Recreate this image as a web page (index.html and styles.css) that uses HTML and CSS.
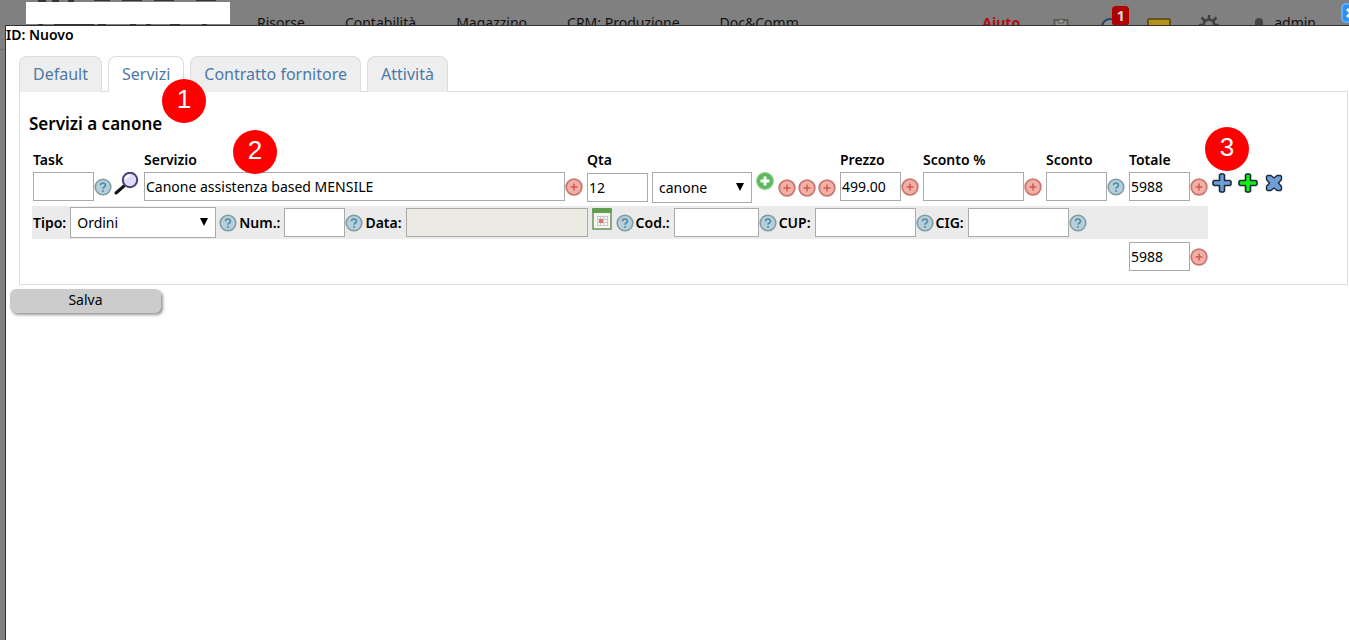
FILE: index.html
```
<!DOCTYPE html>
<html lang="it">
<head>
    <meta charset="UTF-8">
    <meta name="viewport" content="width=device-width, initial-scale=1.0">
    <title>Contratto</title>
    <link rel="stylesheet" href="styles.css">
</head>
<body>

    <!-- icone condivise -->
    <svg class="sprite" aria-hidden="true">
        <symbol id="i-help" viewBox="0 0 18 18">
            <circle cx="9" cy="9" r="7.8" fill="#b5d0da" stroke="#7f9ca4" stroke-width="1.6"/>
            <path d="M6.5 7.3C6.5 4.3 11.5 4.3 11.5 7.2C11.5 9 9 9 9 10.8" fill="none" stroke="#4f87a5" stroke-width="1.6"/>
            <circle cx="9" cy="12.9" r="1" fill="#4f87a5"/>
        </symbol>
        <symbol id="i-req" viewBox="0 0 18 18">
            <circle cx="9" cy="9" r="7.8" fill="#f3b0a6" stroke="#cb7670" stroke-width="1.8"/>
            <path d="M9 5.5V12.5M5.5 9H12.5" stroke="#cf5a50" stroke-width="1.5"/>
        </symbol>
        <symbol id="i-plus" viewBox="0 0 20 20">
            <path d="M8.5 1H11.5L12.5 2V7.5H18L19 8.5V11.5L18 12.5H12.5V18L11.5 19H8.5L7.5 18V12.5H2L1 11.5V8.5L2 7.5H7.5V2Z" fill="currentColor" stroke="#1c2b3c" stroke-width="1.6" stroke-linejoin="round"/>
        </symbol>
    </svg>

    <header class="topbar">
        <div class="logo">
            <svg width="204" height="26" aria-hidden="true">
                <path d="M12 0h8v2h-8zM26 0h7v2h-7zM42 0h6v2h-6zM68 0h16v1h-16zM96 0h20v1h-20zM128 0h20v1h-20zM170 0h20v1h-20z" fill="#333"/>
                <rect y="2" width="204" height="22" fill="#fff"/>
                <path d="M12 24h5v2h-5zM28 24h40v1h-40zM72 24h8v1h-8zM104 24h6v1h-6zM120 24h5v1h-5zM144 24h10v1h-10zM176 24h5v1h-5z" fill="#333"/>
            </svg>
        </div>
        <nav class="menu">
            <a href="#">Risorse</a>
            <a href="#">Contabilità</a>
            <a href="#">Magazzino</a>
            <a href="#">CRM: Produzione</a>
            <a href="#">Doc&amp;Comm</a>
        </nav>
        <div class="tools">
            <a href="#" class="help-link">Aiuto</a>
            <svg width="16" height="20" viewBox="0 0 16 20" aria-hidden="true">
                <path d="M1.5 5H14.5V19H1.5Z" fill="#929292" stroke="#5c5950" stroke-width="1.8"/>
                <path d="M5 8V5H7V4H9V5H11V8Z" fill="#999" stroke="#5c5950"/>
            </svg>
            <span class="alerts">
                <svg width="22" height="20" viewBox="0 0 22 20" aria-hidden="true">
                    <circle cx="13" cy="12" r="8" fill="#8b8f93" stroke="#1d4468" stroke-width="2"/>
                </svg>
                <span class="count">1</span>
            </span>
            <svg width="24" height="20" viewBox="0 0 24 20" aria-hidden="true">
                <rect x="1" y="4" width="22" height="15" rx="1" fill="#b8901c" stroke="#54420f" stroke-width="1.6"/>
            </svg>
            <svg width="20" height="20" viewBox="0 0 20 20" aria-hidden="true">
                <circle cx="10" cy="10" r="5.5" fill="none" stroke="#404040" stroke-width="2.5"/>
                <path d="M10 0V4M10 16V20M0 10H4M16 10H20M2.5 2.5L6 6M14 14L17.5 17.5M17.5 2.5L14 6M6 14L2.5 17.5" stroke="#404040" stroke-width="2.5"/>
            </svg>
            <a href="#" class="user">
                <svg width="10" height="20" viewBox="0 0 10 20" aria-hidden="true">
                    <rect x="1" y="5" width="8" height="13" rx="4" fill="#444"/>
                </svg>
                admin
            </a>
        </div>
    </header>

    <button type="button" class="close-btn" aria-label="Chiudi">
        <svg width="20" height="20" viewBox="0 0 20 20" aria-hidden="true">
            <rect x="1" y="1" width="18" height="18" rx="4" fill="#2f8ff5" stroke="#5ab0ff" stroke-width="2"/>
            <path d="M6 6L14 14M14 6L6 14" stroke="#fff" stroke-width="2.5"/>
        </svg>
    </button>

    <main class="modal">
        <div class="record-id">ID: Nuovo</div>

        <nav class="tabs">
            <a href="#" class="tab">Default</a>
            <a href="#" class="tab active">Servizi<span class="marker marker-tab">1</span></a>
            <a href="#" class="tab">Contratto fornitore</a>
            <a href="#" class="tab">Attività</a>
        </nav>

        <form>
            <section class="panel">
                <h2>Servizi a canone</h2>
                <div class="lines">
                    <div class="line-main">
                        <div class="service-row">
                            <div class="field">
                                <label for="task">Task</label>
                                <div class="controls">
                                    <input type="text" id="task" class="w-small">
                                    <svg class="icon"><use href="#i-help"/></svg>
                                    <svg class="lens" viewBox="0 0 28 26" aria-hidden="true">
                                        <path d="M4 21L12 14" stroke="#111" stroke-width="3" stroke-linecap="round"/>
                                        <circle cx="18" cy="8" r="7.2" fill="#dedcf8" stroke="#45407a" stroke-width="2"/>
                                        <path d="M13.5 7A5 5 0 0 1 18 3.5" fill="none" stroke="#fff" stroke-width="2"/>
                                    </svg>
                                </div>
                            </div>
                            <div class="field">
                                <label for="servizio">Servizio</label>
                                <div class="controls">
                                    <input type="text" id="servizio" class="w-large" value="Canone assistenza based MENSILE">
                                    <svg class="icon"><use href="#i-req"/></svg>
                                </div>
                                <span class="marker marker-service">2</span>
                            </div>
                            <div class="field">
                                <label for="qta">Qta</label>
                                <div class="controls qty">
                                    <input type="text" id="qta" class="w-small" value="12">
                                    <span class="select unit">
                                        <select aria-label="Unità">
                                            <option>canone</option>
                                        </select>
                                    </span>
                                    <svg class="icon add" viewBox="0 0 18 18" aria-hidden="true">
                                        <circle cx="9" cy="9" r="8.3" fill="#5cb85a" stroke="#8bc98a" stroke-width="1.2"/>
                                        <path d="M9 4.5V13.5M4.5 9H13.5" stroke="#fff" stroke-width="3"/>
                                    </svg>
                                    <div class="icon-set">
                                        <svg class="icon"><use href="#i-req"/></svg>
                                        <svg class="icon"><use href="#i-req"/></svg>
                                        <svg class="icon"><use href="#i-req"/></svg>
                                    </div>
                                </div>
                            </div>
                            <div class="field">
                                <label for="prezzo">Prezzo</label>
                                <div class="controls">
                                    <input type="text" id="prezzo" class="w-small" value="499.00">
                                    <svg class="icon"><use href="#i-req"/></svg>
                                </div>
                            </div>
                            <div class="field">
                                <label for="sconto-perc">Sconto %</label>
                                <div class="controls">
                                    <input type="text" id="sconto-perc" class="w-medium">
                                    <svg class="icon"><use href="#i-req"/></svg>
                                </div>
                            </div>
                            <div class="field">
                                <label for="sconto">Sconto</label>
                                <div class="controls">
                                    <input type="text" id="sconto" class="w-small">
                                    <svg class="icon"><use href="#i-help"/></svg>
                                </div>
                            </div>
                            <div class="field">
                                <label for="totale">Totale</label>
                                <div class="controls">
                                    <input type="text" id="totale" class="w-small" value="5988">
                                    <svg class="icon"><use href="#i-req"/></svg>
                                </div>
                            </div>
                        </div>

                        <div class="order-row">
                            <div class="pair">
                                <label for="tipo">Tipo:</label>
                                <span class="select type">
                                    <select id="tipo">
                                        <option>Ordini</option>
                                    </select>
                                </span>
                                <svg class="icon"><use href="#i-help"/></svg>
                            </div>
                            <div class="pair">
                                <label for="num">Num.:</label>
                                <input type="text" id="num" class="w-small">
                                <svg class="icon"><use href="#i-help"/></svg>
                            </div>
                            <div class="pair">
                                <label for="data">Data:</label>
                                <input type="text" id="data" class="date" readonly>
                                <svg class="calendar" viewBox="0 0 20 22" aria-hidden="true">
                                    <rect x="1" y="1" width="18" height="20" fill="#f4f4f0" stroke="#6f9a62" stroke-width="1.6"/>
                                    <rect x="0" y="0" width="20" height="5" rx="1" fill="#62a04f"/>
                                    <path d="M5 8.5H16M5 11.5H16M5 14.5H16M5 17.5H16M5.5 8V18M8.5 8V18M11.5 8V18M15.5 8V18" stroke="#c9c9c9"/>
                                    <rect x="7" y="11" width="4" height="4" fill="#d9766c"/>
                                </svg>
                                <svg class="icon"><use href="#i-help"/></svg>
                            </div>
                            <div class="pair">
                                <label for="cod">Cod.:</label>
                                <input type="text" id="cod" class="code">
                                <svg class="icon"><use href="#i-help"/></svg>
                            </div>
                            <div class="pair">
                                <label for="cup">CUP:</label>
                                <input type="text" id="cup" class="w-medium">
                                <svg class="icon"><use href="#i-help"/></svg>
                            </div>
                            <div class="pair">
                                <label for="cig">CIG:</label>
                                <input type="text" id="cig" class="w-medium">
                                <svg class="icon"><use href="#i-help"/></svg>
                            </div>
                        </div>

                        <div class="total-row">
                            <input type="text" class="w-small" value="5988" aria-label="Totale servizi">
                            <svg class="icon"><use href="#i-req"/></svg>
                        </div>
                    </div>

                    <div class="line-actions">
                        <button type="button" class="blue" aria-label="Aggiungi"><svg><use href="#i-plus"/></svg></button>
                        <button type="button" class="green" aria-label="Duplica"><svg><use href="#i-plus"/></svg></button>
                        <button type="button" class="blue" aria-label="Elimina">
                            <svg viewBox="0 0 20 20"><path d="M3.5 2.5H7L10 5L13 2.5H16.5L17.5 3.5V6.500L14.500 10L17.500 13.500V16.500L16.500 17.500H13L10 15L7 17.500H3.500L2.500 16.500V13.500L5.500 10L2.500 6.500V3.500Z" fill="currentColor" stroke="#1c2b3c" stroke-width="1.4" stroke-linejoin="round"/></svg>
                        </button>
                        <span class="marker marker-actions">3</span>
                    </div>
                </div>
            </section>

            <button type="submit" class="save-btn">Salva</button>
        </form>
    </main>

</body>
</html>
```
FILE: styles.css
```
:root {
    --overlay: #808080;
    --tab-bg: #eeeeee;
    --border: #dddddd;
    --input-border: #aaaaaa;
    --link: #4c79a6;
}

* {
    box-sizing: border-box;
}

body {
    margin: 0;
    height: 100vh;
    overflow: hidden;
    background: var(--overlay);
    color: #000;
    font-family: "Noto Sans", "Open Sans", sans-serif;
    font-size: 14px;
}

.sprite {
    position: absolute;
    width: 0;
    height: 0;
}

/* barra superiore, coperta in parte dalla finestra */
.topbar {
    display: flex;
    align-items: flex-start;
    height: 50px;
    padding: 0 33px 0 26px;
    border-bottom: 1px solid #6a6a6a;
}

.logo {
    width: 204px;
}

.menu {
    display: flex;
    gap: 40px;
    margin-left: 27px;
    padding-top: 13px;
}

.topbar a {
    color: #111;
    line-height: 20px;
    text-decoration: none;
}

.tools {
    display: flex;
    align-items: flex-start;
    gap: 28px;
    margin-left: auto;
    padding-top: 15px;
}

.topbar .help-link {
    padding-right: 5px;
    color: #b00d12;
    font-weight: bold;
}

.tools a {
    margin-top: -2px;
}

.alerts {
    position: relative;
}

.count {
    position: absolute;
    top: -9px;
    left: 15px;
    width: 17px;
    height: 20px;
    border-radius: 4px;
    background: #b00000;
    color: #ddd;
    font-weight: bold;
    line-height: 20px;
    text-align: center;
}

.user {
    display: flex;
    gap: 10px;
    padding-left: 7px;
}

.close-btn {
    position: absolute;
    top: 3px;
    right: -12px;
    height: 20px;
    padding: 0;
    border: 0;
    background: none;
}

.modal {
    position: absolute;
    top: 25px;
    right: 0;
    bottom: 0;
    left: 5px;
    border: 1px solid #333;
    border-width: 1px 0 0 1px;
    background: #fff;
}

.record-id {
    height: 30px;
    font-weight: 600;
    line-height: 18px;
}

/* schede */
.tabs {
    display: flex;
    gap: 6px;
    padding-left: 13px;
}

.tab {
    position: relative;
    height: 36px;
    padding: 0 13px;
    border: 1px solid var(--border);
    border-bottom: 0;
    border-radius: 8px 8px 0 0;
    background: var(--tab-bg);
    color: var(--link);
    font-size: 16px;
    line-height: 35px;
    text-decoration: none;
}

.tab.active {
    background: #fff;
}

.panel {
    margin: -1px 1px 0 13px;
    padding: 20px 9px 13px;
    border: 1px solid var(--border);
}

h2 {
    margin: 0 0 14px;
    font-size: 17px;
    font-weight: 600;
    line-height: 24px;
}

.lines {
    display: flex;
    gap: 4px;
    padding-left: 3px;
}

.line-main {
    flex: none;
}

.service-row {
    display: flex;
    gap: 4px;
    margin-bottom: 3px;
    padding-left: 1px;
}

.field {
    position: relative;
}

label {
    font-weight: 600;
}

.field label {
    display: block;
    height: 22px;
    line-height: 20px;
}

.controls,
.pair,
.total-row {
    display: flex;
    align-items: center;
}

input,
select {
    height: 29px;
    padding: 0 1px;
    border: 1px solid var(--input-border);
    border-radius: 0;
    background: #fff;
    color: #000;
    font: inherit;
}

/* tendina con freccia propria */
.select {
    position: relative;
}

.select select {
    display: block;
    width: 100%;
    height: 31px;
    padding: 0 6px;
    appearance: none;
}

.select::after {
    content: "";
    position: absolute;
    top: 11px;
    right: 8px;
    border: 4px solid transparent;
    border-top: 8px solid #000;
    border-bottom: 0;
    pointer-events: none;
}

.w-small {
    width: 61px;
}

.w-medium {
    width: 101px;
}

.w-large {
    width: 421px;
}

.icon {
    flex: none;
    width: 18px;
    height: 18px;
}

.lens {
    align-self: flex-start;
    width: 28px;
    height: 26px;
}

.qty {
    gap: 4px;
}

.unit {
    width: 100px;
}

.add {
    align-self: flex-start;
}

.icon-set {
    display: flex;
    gap: 2px;
}

.order-row {
    display: flex;
    align-items: center;
    gap: 2px;
    height: 33px;
    padding-left: 1px;
    background: #ebebeb;
}

.total-row {
    justify-content: flex-end;
    margin-top: 3px;
}

.pair label {
    margin-right: 4px;
}

.type {
    width: 146px;
    margin-right: 3px;
}

.code {
    width: 85px;
}

.date {
    width: 182px;
    background: #ebebe4;
}

.calendar {
    align-self: flex-start;
    width: 20px;
    height: 22px;
    margin: 0 4px;
}

/* azioni di riga */
.line-actions {
    position: relative;
    display: flex;
    gap: 6px;
    height: 20px;
    margin-top: 23px;
}

.line-actions button {
    width: 20px;
    height: 20px;
    padding: 0;
    border: 0;
    background: none;
}

.line-actions svg {
    display: block;
    width: 20px;
    height: 20px;
}

.blue {
    color: #6f9fd4;
}

.green {
    color: #12ee12;
}

.marker {
    position: absolute;
    z-index: 1;
    width: 44px;
    height: 44px;
    border-radius: 50%;
    background: #ff0000;
    color: #fff;
    font: 26px/40px "Liberation Sans", Arial, sans-serif;
    text-align: center;
}

.marker-tab {
    top: 22px;
    left: 53px;
}

.marker-service {
    top: -20px;
    left: 89px;
}

.marker-actions {
    top: -46px;
    left: -7px;
}

.save-btn {
    display: block;
    width: 151px;
    height: 24px;
    margin: 4px 0 0 4px;
    padding: 0 0 3px;
    border: 0;
    border-radius: 6px;
    background: #cccccc;
    box-shadow: 2px 2px 3px #999;
    color: #000;
    font: inherit;
    line-height: 20px;
}
```
